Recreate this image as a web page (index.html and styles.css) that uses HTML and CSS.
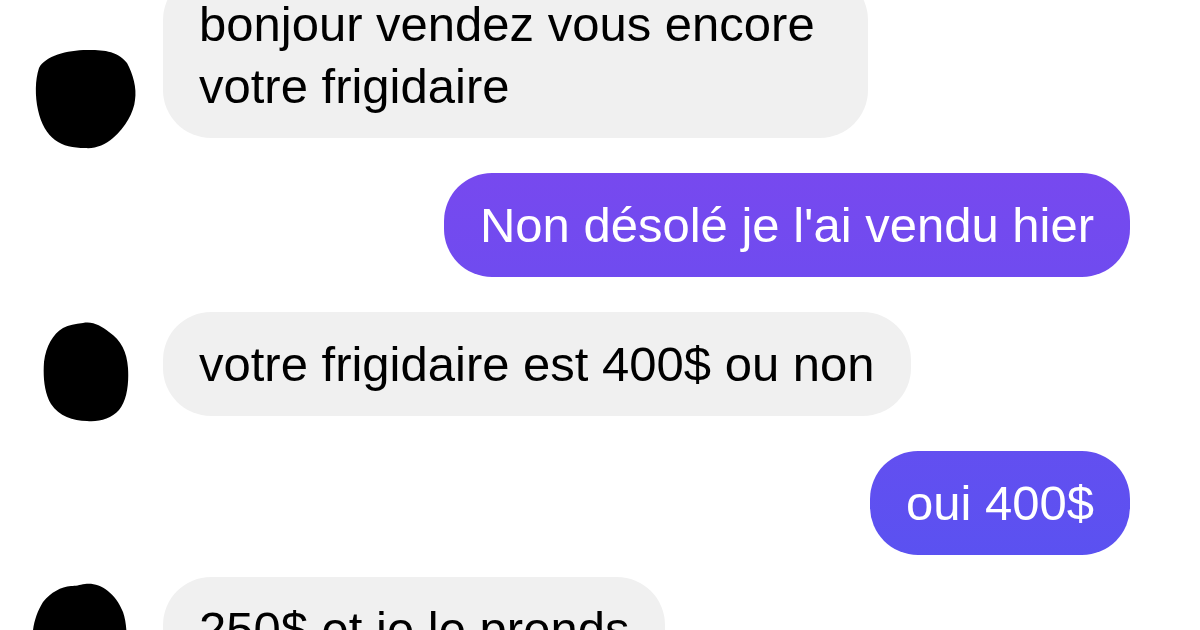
FILE: index.html
```html
<!DOCTYPE html>
<html>
<head>
<meta charset="utf-8">
<link rel="stylesheet" href="styles.css">
</head>
<body>
    <div class="chat">
        <div class="row in first">
            <svg class="avatar a1" viewBox="0 0 102 100"><path d="M52,0 C66,0 82,0 92,13 C98,24 102,38 100,50 C99,62 90,78 78,88 C70,95 60,99 50,98 C38,98 28,96 20,90 C12,84 6,74 3,60 C0,46 0,30 4,18 C10,6 32,0 52,0 Z"/></svg>
            <div class="bubble wide">bonjour vendez vous encore votre frigidaire</div>
        </div>
        <div class="row out">
            <div class="bubble">Non désolé je l'ai vendu hier</div>
        </div>
        <div class="row in">
            <svg class="avatar a2" viewBox="0 0 86 100"><path d="M40,1 C50,-1 58,4 66,10 C78,18 84,30 85,46 C86,62 84,78 76,88 C68,97 56,100 44,99 C30,99 16,94 8,82 C1,70 0,54 1,40 C3,24 10,12 20,6 C26,3 32,2 40,1 Z"/></svg>
            <div class="bubble">votre frigidaire est 400$ ou non</div>
        </div>
        <div class="row out">
            <div class="bubble">oui 400$</div>
        </div>
        <div class="row in last">
            <svg class="avatar a3" viewBox="0 0 100 104"><path d="M56,2 C70,0 86,10 94,30 C100,48 98,70 90,86 C80,100 64,104 48,102 C30,102 14,92 7,76 C0,58 4,36 14,20 C22,10 32,5 42,4 C47,4 50,3 56,2 Z"/></svg>
            <div class="bubble">250$ et je le prends</div>
        </div>
    </div>
</body>
</html>
```

FILE: styles.css
```css
html, body {
    margin: 0;
    padding: 0;
    width: 100%;
    height: 100%;
    overflow: hidden;
}
body {
    background: #ffffff;
    font-family: "Liberation Sans", Arial, sans-serif;
}
.chat {
    display: flex;
    flex-direction: column;
    margin-top: -28px;
}
.row {
    display: flex;
    align-items: flex-end;
    margin-top: 35px;
}
.row.first {
    margin-top: 0;
}
.row.last {
    margin-top: 22px;
}
.row.in {
    padding-left: 35px;
    gap: 26px;
}
.row.out {
    justify-content: flex-end;
    padding-right: 70px;
}
.bubble {
    box-sizing: border-box;
    padding: 21px 36px;
    font-size: 49px;
    line-height: 62px;
    border-radius: 48px;
    white-space: nowrap;
}
.bubble.wide {
    white-space: normal;
    max-width: 705px;
}
.in .bubble {
    background: #f0f0f0;
    color: #000000;
}
.out .bubble {
    color: #ffffff;
    background: linear-gradient(to bottom, #8445ee 0, #5553f1 630px);
    background-attachment: fixed;
}
.avatar {
    flex: none;
    fill: #000000;
}
.a1 {
    width: 102px;
    height: 100px;
    margin-bottom: -12px;
}
.a2 {
    width: 86px;
    height: 100px;
    margin-left: 8px;
    margin-right: 8px;
    margin-bottom: -6px;
}
.a3 {
    width: 100px;
    height: 104px;
    margin-left: -6px;
    margin-right: 8px;
    margin-bottom: -5px;
}
```
